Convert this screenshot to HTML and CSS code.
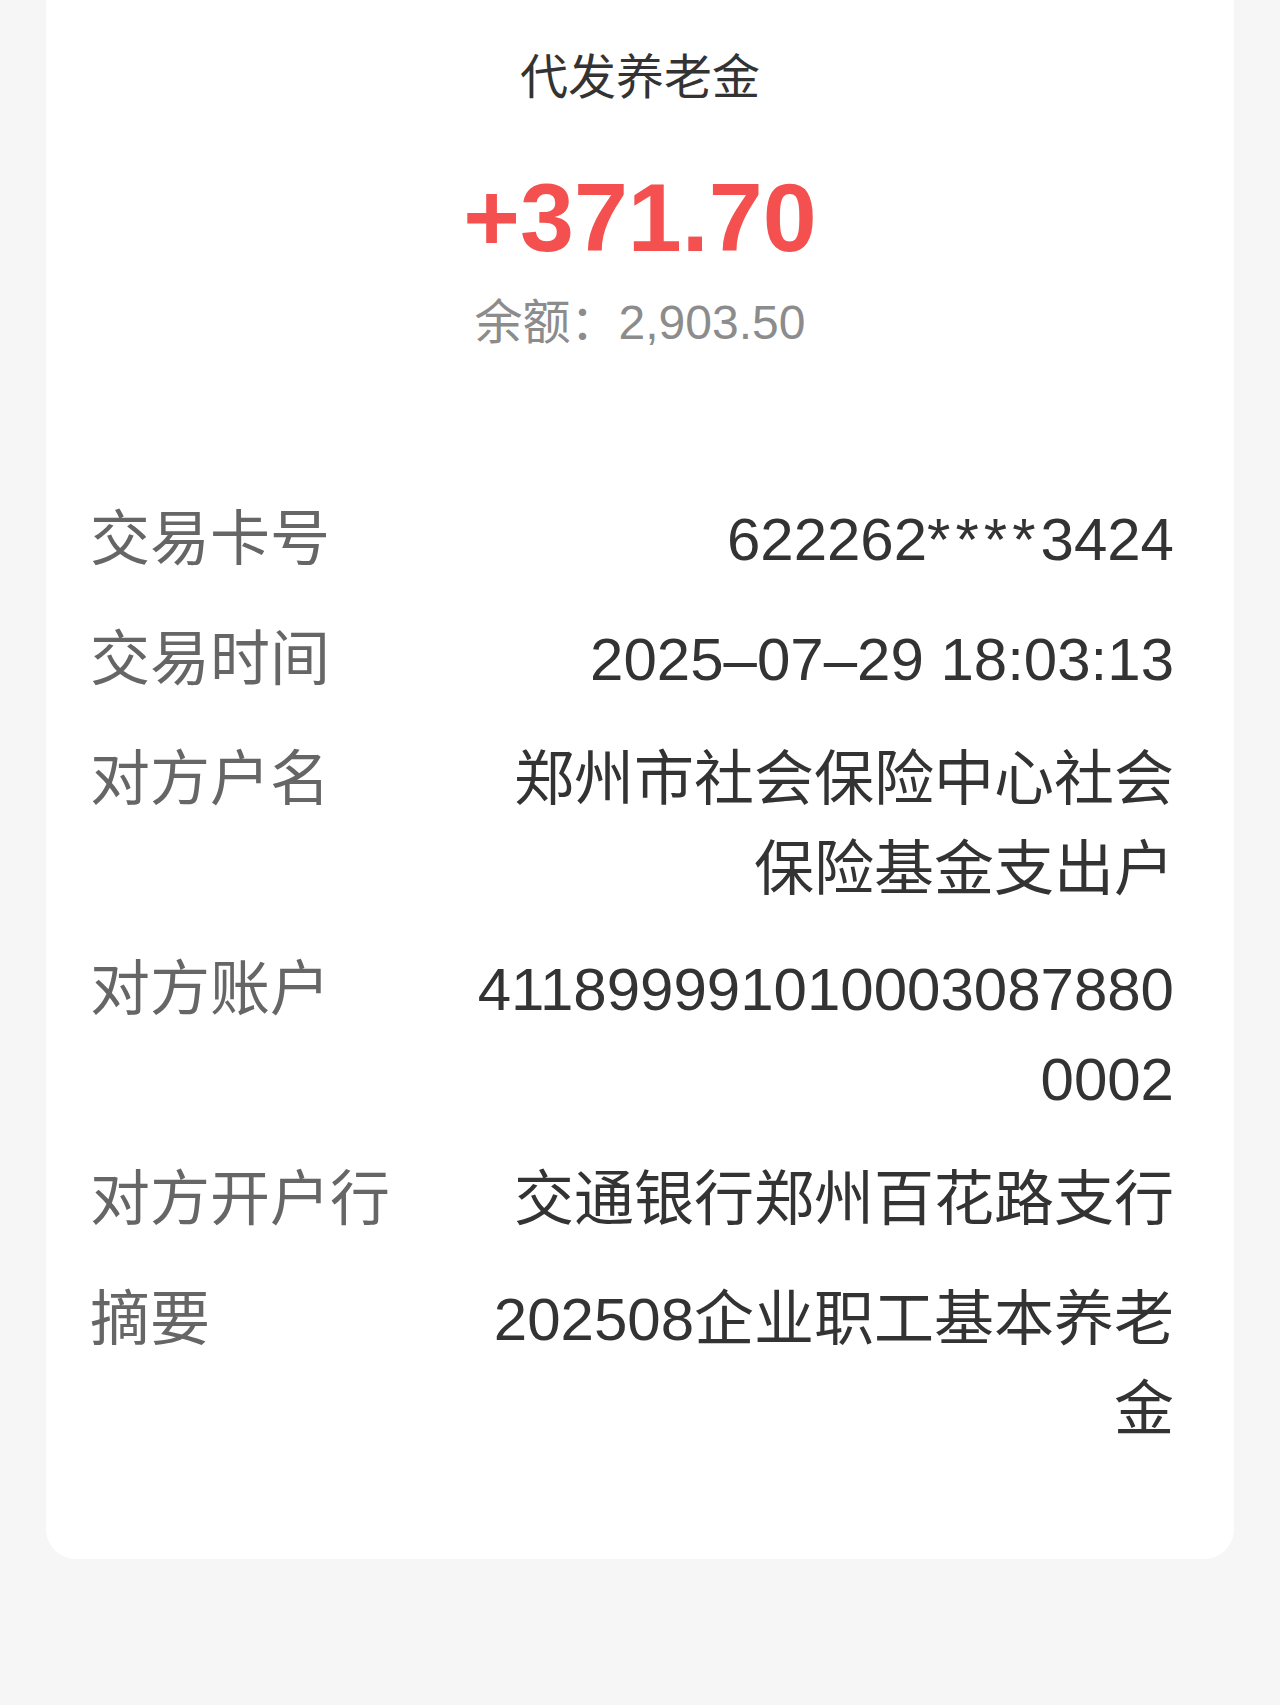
FILE: index.html
```html
<!DOCTYPE html>
<html lang="zh-CN">
<head>
    <meta charset="UTF-8">
    <meta name="viewport" content="width=device-width, initial-scale=1.0">
    <title>交易详情</title>
    <link rel="stylesheet" href="styles.css">
</head>
<body>
    <!-- Detail card -->
    <div class="detail-card">
        <div class="summary">
            <h1 class="trade-type">代发养老金</h1>
            <div class="amount income">+371.70</div>
            <div class="balance">余额：2,903.50</div>
        </div>

        <div class="info-list">
            <div class="info-row">
                <span class="info-label">交易卡号</span>
                <span class="info-value">622262<span class="mask">****</span>3424</span>
            </div>
            <div class="info-row">
                <span class="info-label">交易时间</span>
                <span class="info-value">2025–07–29 18:03:13</span>
            </div>
            <div class="info-row">
                <span class="info-label">对方户名</span>
                <span class="info-value">郑州市社会保险中心社会保险基金支出户</span>
            </div>
            <div class="info-row">
                <span class="info-label">对方账户</span>
                <span class="info-value">4118999910100030878800002</span>
            </div>
            <div class="info-row">
                <span class="info-label">对方开户行</span>
                <span class="info-value">交通银行郑州百花路支行</span>
            </div>
            <div class="info-row">
                <span class="info-label">摘要</span>
                <span class="info-value">202508企业职工基本养老<br>金</span>
            </div>
        </div>
    </div>
</body>
</html>
```

FILE: styles.css
```css
* {
    margin: 0;
    padding: 0;
    box-sizing: border-box;
}

body {
    background: #f6f6f6;
    font-family: "Liberation Sans", "Noto Sans CJK SC", sans-serif;
    color: #333;
}

.detail-card {
    background: #fff;
    margin: 0 46px;
    border-radius: 0 0 30px 30px;
    padding: 48px 60px 104px 44px;
}

.summary {
    text-align: center;
    padding-left: 16px;
}

.trade-type {
    font-size: 48px;
    font-weight: 400;
    line-height: 60px;
    color: #333;
}

.amount {
    margin-top: 55px;
    font-size: 97px;
    font-weight: 700;
    line-height: 110px;
}

.income {
    color: #f55050;
}

.balance {
    margin-top: 20px;
    font-size: 48px;
    line-height: 60px;
    color: #8c8c8c;
}

.info-list {
    margin-top: 142px;
    display: flex;
    flex-direction: column;
    gap: 30px;
}

.info-row {
    display: flex;
    gap: 42px;
    font-size: 60px;
    line-height: 90px;
}

.info-label {
    flex: 0 0 330px;
    color: #666;
}

.info-value {
    flex: 1;
    text-align: right;
    word-break: break-all;
    color: #333;
}

.mask {
    letter-spacing: 5px;
}
```
